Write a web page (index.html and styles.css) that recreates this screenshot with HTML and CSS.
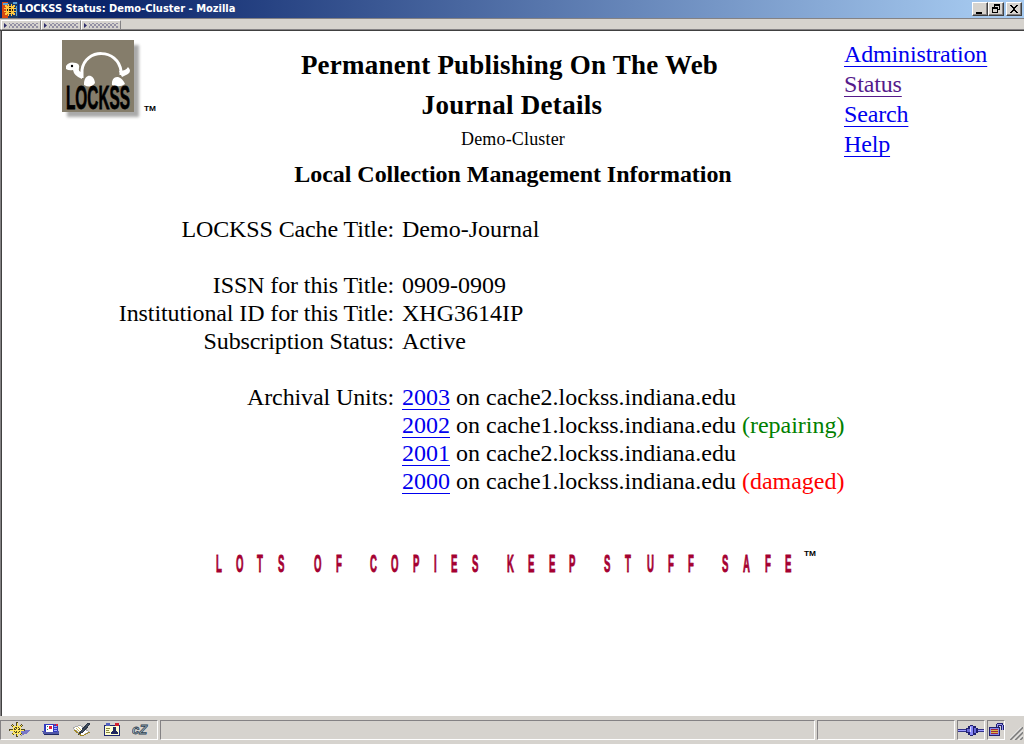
FILE: index.html
```html
<!DOCTYPE html>
<html lang="en">
<head>
<meta charset="utf-8">
<title>LOCKSS Status: Demo-Cluster - Mozilla</title>
<link rel="stylesheet" href="styles.css">
</head>
<body>
<div class="window">
  <header class="titlebar">
    <svg class="app-icon" width="16" height="16" viewBox="0 0 16 16" shape-rendering="crispEdges">
      <rect width="6" height="16" fill="#d84a10"/><rect x="6" width="10" height="16" fill="#183868"/><path d="M1 1h5v2H1zM11 0h4v2h-4zM14 4h1v10h-1z" fill="#58a0d8"/>
      <path d="M6 2h1v12H6zM9 2h1v12H9zM2 6h12v1H2zM2 9h12v1H2zM3 3h2v2H3zM11 3h2v2h-2zM3 11h2v2H3zM11 11h2v2h-2zM4 4h8v8H4z" fill="#ffc840"/>
      <path d="M7 5h2v1H7zM5 7h1v2H5zM10 7h1v2h-1zM7 10h2v1H7zM7 7h2v2H7z" fill="#302010"/>
    </svg>
    <span class="title-text">LOCKSS Status: Demo-Cluster - Mozilla</span>
    <div class="controls">
      <button class="ctl" aria-label="Minimize"><svg width="14" height="12" shape-rendering="crispEdges"><path d="M3 9h6v2H3z"/></svg></button>
      <button class="ctl restore" aria-label="Restore"><svg width="14" height="12" shape-rendering="crispEdges"><path d="M5 1h6v6H9V6h1V3H6v1H5zM3 4h6v6H3zM4 6v3h4V6z" fill-rule="evenodd"/></svg></button>
      <button class="ctl" aria-label="Close"><svg width="14" height="12" shape-rendering="crispEdges"><path d="M3 2h2v1h1v1h2V3h1V2h2v1h-1v1H9v1H8v2h1v1h1v1h1v1H9V9H8V8H6v1H5v1H3V9h1V8h1V7h1V5H5V4H4V3H3z"/></svg></button>
    </div>
  </header>
  <div class="toolbar">
    <div class="grip"><i></i></div><div class="grip"><i></i></div><div class="grip"><i></i></div>
  </div>
  <main class="page">
    <div class="top">
      <svg class="logo" width="100" height="84" viewBox="0 0 100 84">
        <defs><filter id="soft"><feGaussianBlur stdDeviation="1.7"/></filter></defs>
        <rect x="5" y="5" width="72" height="72" fill="#aaa" filter="url(#soft)"/>
        <rect width="72" height="72" fill="#857d6b"/>
        <path d="M20 38V30C23 8 56 8 59 31V35" fill="none" stroke="#fff" stroke-width="3"/>
        <path d="M4 26q3-5 10-3q4 1 3 5q-1 4 3 4v7q-8-3-9-9q-4 1-7-1zM57 31q7 0 9-4q4 4 0 7l-6 3z" fill="#fff"/>
        <path d="M22 43c1-10 10-9 11 0q-4 6-11 2zM50 45c-1-10 9-11 13-1q-5 4-13 1z" fill="#fff"/>
        <circle cx="10" cy="26" r="1.200"/>
        <text class="logo-name" transform="translate(4 69) scale(.47 1)" textLength="136" lengthAdjust="spacingAndGlyphs">LOCKSS</text>
        <text class="tm" x="82" y="71" textLength="12" lengthAdjust="spacingAndGlyphs">TM</text>
      </svg>
      <div class="headings">
        <h1 class="h-main">Permanent Publishing On The Web</h1>
        <h1 class="h-sub">Journal Details</h1>
        <p class="cluster">Demo-Cluster</p>
        <h2 class="h-info">Local Collection Management Information</h2>
      </div>
      <nav class="links">
        <a href="#">Administration</a>
        <a href="#" class="visited">Status</a>
        <a href="#">Search</a>
        <a href="#">Help</a>
      </nav>
    </div>
    <dl class="details">
      <dt>LOCKSS Cache Title:</dt><dd>Demo-Journal</dd>
      <dt class="gap">ISSN for this Title:</dt><dd class="gap">0909-0909</dd>
      <dt>Institutional ID for this Title:</dt><dd>XHG3614IP</dd>
      <dt>Subscription Status:</dt><dd>Active</dd>
      <dt class="gap">Archival Units:</dt><dd class="gap"><a href="#">2003</a> on cache2.lockss.indiana.edu</dd>
      <dd><a href="#">2002</a> on cache1.lockss.indiana.edu <span class="ok">(repairing)</span></dd>
      <dd><a href="#">2001</a> on cache2.lockss.indiana.edu</dd>
      <dd><a href="#">2000</a> on cache1.lockss.indiana.edu <span class="bad">(damaged)</span></dd>
    </dl>
    <svg class="slogan" width="604" height="28" viewBox="0 0 604 28">
      <text class="slogan-text" transform="translate(0 24) scale(.4 1)" x="0 50 102.5 155 200 245 300 340 385 437.5 492.5 545 587.5 640 690 727.5 780 832.5 882.5 930 970 1022.5 1077.5 1130 1180 1220 1265 1317.5 1372.5 1422.5">LOTS OF COPIES KEEP STUFF SAFE</text>
      <text class="tm" x="588" y="8" textLength="12" lengthAdjust="spacingAndGlyphs">TM</text>
    </svg>
  </main>
  <footer class="status">
    <div class="panel icons">
      <svg width="22" height="16" viewBox="0 0 22 16" shape-rendering="crispEdges"><path d="M11 8h11l-2 3-7 3z" fill="#7878c8"/><path d="M9 0v15M1 8h16M4 3l10 10M14 3L4 13" stroke="#504820" stroke-width="2"/><path d="M9 1v13M2 8h14M4 3l10 10M14 3L4 13" stroke="#ffe860"/><circle cx="9" cy="8" r="4" fill="none" stroke="#ffe860"/></svg>
      <svg width="20" height="16" viewBox="0 0 20 16" shape-rendering="crispEdges"><path d="M3 2h14v9H3z" fill="#3038c0"/><path d="M5 3h7v7H5z" fill="#fff"/><path d="M8 4h3v3H8zM13 2h1v1h-1zM15 2h2v2h-2z" fill="#e02040"/><path d="M6 4h1v1H6zM6 7h1v1H6z" fill="#228060"/><path d="M1 9h3v1h12v-1h2v4H3z" fill="#5058a8"/><path d="M3 12h15v1H3z" fill="#202860"/><path d="M13 4h3M13 6h3M13 8h3" stroke="#a0a8ff"/></svg>
      <svg width="20" height="16" viewBox="0 0 20 16" shape-rendering="crispEdges"><path d="M1 6l7-3 9 7-7 4z" fill="#fff" stroke="#aaa"/><path d="M2 8l8 6 8-4" fill="none" stroke="#a08828"/><path d="M16 1l-7 8-2 3 4-2 7-8z" fill="#405060" stroke="#303848"/><path d="M4 6l4 4M6 5l3 3" stroke="#d0c060"/></svg>
      <svg width="18" height="16" viewBox="0 0 18 16" shape-rendering="crispEdges"><path d="M1.500 3.500h15v10h-15z" fill="#ffffd0" stroke="#202870"/><path d="M3 1h4v3H3z" fill="#5060c0"/><path d="M12 1h4v3h-4z" fill="#d02030"/><path d="M3 6h4v1H3zM3 8h3v1H3zM3 10h4v1H3z" fill="#888840"/><path d="M10 5h3v4h-3zM8 10l2-1h3l2 1v2H8z" fill="#202860"/></svg>
      <svg width="19" height="16" viewBox="0 0 19 16"><text class="cz" x="0" y="12" textLength="15" lengthAdjust="spacingAndGlyphs">cZ</text></svg>
    </div>
    <div class="panel message"></div>
    <div class="panel progress"></div>
    <div class="panel net"><svg width="26" height="16" viewBox="0 0 26 16" shape-rendering="crispEdges"><path d="M0 7h26v3H0z" fill="#303088"/><path d="M0 8h26v1H0z" fill="#a0a0ff"/><path d="M10 4h8v9h-8zM8 6h12v5H8zM12 3h3v11h-3z" fill="#202070"/><path d="M9 7h3v3H9zM16 6h2v5h-2z" fill="#6868d8"/><path d="M12 4h3v9h-3z" fill="#8888f8"/><path d="M12 5h1v5h-1z" fill="#d8d8ff"/></svg></div>
    <div class="panel lock"><svg width="16" height="16" viewBox="0 0 16 16" shape-rendering="crispEdges"><path d="M9 6V4q0-2 3-2t2 3v3" fill="none" stroke="#202070" stroke-width="3"/><path d="M9 6V4q0-2 3-2t2 3v3" fill="none" stroke="#9898f0"/><path d="M1.500 5.500h10v8h-10z" fill="#8888e8" stroke="#202070"/><path d="M3 7h7v1H3zM3 9h7v1H3zM3 11h7v1H3z" fill="#a02838"/><path d="M3 8h7v1H3zM3 10h7v1H3z" fill="#d8b848"/></svg></div>
    <svg class="resize" width="13" height="13" viewBox="0 0 13 13"><path d="M0 13L13 0M5 13l8-8M10 13l3-3" stroke="#808080" stroke-width="2"/><path d="M-1.500 13L13-1.500M3.500 13L13 3.500M8.500 13L13 8.500" stroke="#fff"/></svg>
  </footer>
</div>
</body>
</html>
```
FILE: styles.css
```css
* { box-sizing: border-box; }
body { margin: 0; background: #d6d3ce; }
.window { width: 1024px; height: 744px; display: flex; flex-direction: column; overflow: hidden; }

.titlebar { height: 18px; flex: none; display: flex; align-items: center; padding: 0 2px; background: linear-gradient(90deg, #0a246a 10%, #a6caf0 97%); }
.app-icon { margin-top: 1px; }
.title-text { margin-left: 1px; color: #fff; font: bold 11px/18px "DejaVu Sans Condensed", "DejaVu Sans", sans-serif; white-space: nowrap; }
.controls { margin-left: auto; display: flex; }
.ctl { width: 16px; height: 14px; padding: 0; display: flex; background: #d6d3ce; border: 1px solid; border-color: #fff #404040 #404040 #fff; box-shadow: inset -1px -1px #848284; border-radius: 0; }
.restore { margin-right: 2px; }

.toolbar { height: 13px; flex: none; display: flex; padding: 1px 0 0 1px; border-top: 1px solid #848284; border-bottom: 1px solid #404040; background: #d6d3ce; box-shadow: inset 0 -1px #848284; }
.grip { width: 40px; height: 10px; padding: 2px 2px; display: flex; gap: 2px; border: 1px solid; border-color: #fff #848284 #848284 #fff; }
.grip::before { content: ""; flex: none; width: 3px; height: 5px; background: #31306b; clip-path: polygon(0 0, 100% 50%, 0 100%); }
.grip i { width: 29px; height: 5px; background: conic-gradient(#52507b 25%, transparent 0) -1px 1px / 4px 4px, conic-gradient(#52507b 25%, transparent 0) 1px -1px / 4px 4px; opacity: .5; }

.page { flex: 1; min-height: 0; padding: 9px 0 0 60px; background: #fff; border-left: 1px solid #848284; box-shadow: inset 1px 0 #404040; color: #000; font: 24px/28px "Liberation Serif", serif; }
.page a { color: #0000ee; text-decoration: underline 1px; text-underline-offset: 4px; text-decoration-skip-ink: none; }
.page .visited { color: #551a8b; }

.top { display: flex; height: 175px; padding-left: 1px; }
.logo { flex: none; overflow: visible; }
.logo-name { font: bold 33px "Liberation Sans", sans-serif; stroke: #000; stroke-width: .6px; vector-effect: non-scaling-stroke; }
.tm { font: bold 7px "Liberation Sans", sans-serif; }
.headings { width: 600px; padding-top: 5px; margin-left: 51px; text-align: center; margin-right: 31px; white-space: nowrap; }
.headings h1, .headings h2, .headings p { margin: 0; }
.headings .h-main { padding-right: 7px; letter-spacing: .23px; }
.h-main, .h-sub { font: bold 27px/40px "Liberation Serif", serif; }
.headings .h-sub { padding-right: 2px; letter-spacing: .3px; }
.cluster { font-size: 18px; line-height: 28px; letter-spacing: .17px; }
.h-info { font: bold 24px/42px "Liberation Serif", serif; letter-spacing: -.05px; }
.links { display: flex; flex-direction: column; align-items: flex-start; gap: 2px; letter-spacing: -.15px; }

.details { margin: 0; padding-left: 1px; display: grid; grid-template-columns: 332px 1fr; column-gap: 8px; }
.details dt { text-align: right; white-space: nowrap; letter-spacing: -.11px; }
.details dd { grid-column: 2; margin: 0; white-space: nowrap; }
.details .gap { margin-top: 28px; }
.ok { color: #008000; }
.bad { color: #ff0000; }

.slogan { display: block; margin: 53px 0 0 155px; overflow: visible; }
.slogan-text { font: bold 24px "Liberation Sans", sans-serif; fill: #a50031; stroke: #a50031; stroke-width: .7px; vector-effect: non-scaling-stroke; }

.status { height: 28px; flex: none; display: flex; gap: 2px; padding: 4px 1px 4px 0; background: #d6d3ce; }
.panel { border: 1px solid; border-color: #848284 #fff #fff #848284; }
.icons { width: 158px; display: flex; align-items: center; gap: 11px; padding-left: 7px; }
.cz { font: italic bold 13px "Liberation Sans", sans-serif; fill: #b8d0d8; stroke: #304050; stroke-width: .8px; }
.message { width: 655px; }
.progress { width: 138px; }
.net { width: 28px; display: flex; align-items: center; }
.lock { width: 18px; display: flex; align-items: center; }
.resize { margin: 7px 0 0 auto; }
```
